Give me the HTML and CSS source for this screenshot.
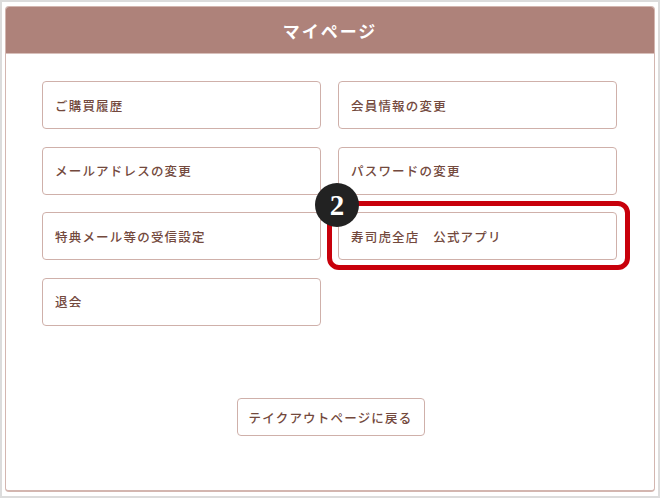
FILE: index.html
```html
<!DOCTYPE html>
<html lang="ja">
<head>
<meta charset="utf-8">
<link rel="stylesheet" href="styles.css">
</head>
<body>
<div class="frame">
  <div class="panel">
    <div class="panel-head">マイページ</div>
    <div class="panel-body">
      <div class="menu">
        <a class="menu-item">ご購買履歴</a>
        <a class="menu-item">会員情報の変更</a>
        <a class="menu-item">メールアドレスの変更</a>
        <a class="menu-item">パスワードの変更</a>
        <a class="menu-item">特典メール等の受信設定</a>
        <a class="menu-item highlighted">寿司虎全店　公式アプリ<span class="ring"></span><span class="badge">2</span></a>
        <a class="menu-item">退会</a>
      </div>
      <div class="back-row">
        <a class="back-btn">テイクアウトページに戻る</a>
      </div>
    </div>
  </div>
</div>
</body>
</html>
```
FILE: styles.css
```css
* { box-sizing: border-box; }
html, body { margin: 0; padding: 0; background: #fff; }
body {
  font-family: "Noto Sans CJK JP", "Noto Sans", sans-serif;
  width: 660px;
  height: 498px;
}
.frame {
  width: 660px;
  height: 498px;
  border: 2px solid #dcdcdc;
  padding: 4px 3px 3px 3px;
  background: #fff;
}
.panel {
  height: 486px;
  border: 1px solid #d3b6b0;
  border-bottom-width: 2px;
  border-radius: 4px;
  overflow: hidden;
  display: flex;
  flex-direction: column;
}
.panel-head {
  background: #ae827a;
  color: #fff;
  height: 46px;
  display: flex;
  align-items: center;
  justify-content: center;
  font-size: 17px;
  font-weight: 700;
  letter-spacing: 2px;
}
.panel-body {
  flex: 1;
  padding: 27px 36px 0 36px;
  border-top: 1px solid #d8c0bb;
}
.menu {
  display: grid;
  grid-template-columns: 279px 279px;
  column-gap: 17px;
  row-gap: 17.5px;
}
.menu-item {
  position: relative;
  height: 48px;
  border: 1px solid #cfb0aa;
  border-radius: 4px;
  display: flex;
  align-items: center;
  padding-left: 12px;
  color: #73493d;
  font-size: 12.5px;
  font-weight: 500;
  letter-spacing: 1.2px;
}
.ring {
  position: absolute;
  left: -12px;
  top: -12px;
  right: -14px;
  bottom: -11px;
  border: 5px solid #c8000b;
  border-radius: 12px;
}
.badge {
  position: absolute;
  left: -24px;
  top: -30px;
  width: 44px;
  height: 44px;
  border-radius: 50%;
  background: #222;
  color: #fff;
  display: flex;
  align-items: center;
  justify-content: center;
  font-family: "Liberation Serif", "DejaVu Serif", serif;
  font-weight: 700;
  font-size: 29px;
  letter-spacing: 0;
}
.back-row {
  display: flex;
  justify-content: center;
  margin-top: 72.5px;
  padding-left: 1px;
}
.back-btn {
  height: 38px;
  width: 188px;
  border: 1px solid #cfb0aa;
  border-radius: 4px;
  display: flex;
  align-items: center;
  justify-content: center;
  color: #73493d;
  font-size: 12.5px;
  font-weight: 500;
  letter-spacing: 1.2px;
}
```
